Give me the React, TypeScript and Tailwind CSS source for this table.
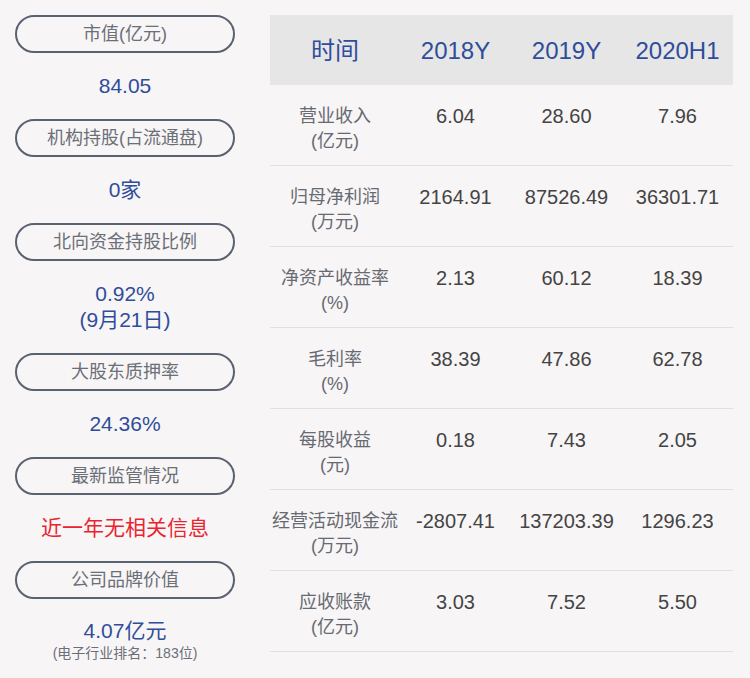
const font = { fontFamily: '"Liberation Sans", "Noto Sans CJK SC", sans-serif' };

type Stat = { label: string; lines: string[]; red?: boolean; note?: string };

const stats: Stat[] = [
  { label: "市值(亿元)", lines: ["84.05"] },
  { label: "机构持股(占流通盘)", lines: ["0家"] },
  { label: "北向资金持股比例", lines: ["0.92%", "(9月21日)"] },
  { label: "大股东质押率", lines: ["24.36%"] },
  { label: "最新监管情况", lines: ["近一年无相关信息"], red: true },
  { label: "公司品牌价值", lines: ["4.07亿元"], note: "(电子行业排名：183位)" },
];

const rows = [
  { name: "营业收入", unit: "(亿元)", vals: ["6.04", "28.60", "7.96"] },
  { name: "归母净利润", unit: "(万元)", vals: ["2164.91", "87526.49", "36301.71"] },
  { name: "净资产收益率", unit: "(%)", vals: ["2.13", "60.12", "18.39"] },
  { name: "毛利率", unit: "(%)", vals: ["38.39", "47.86", "62.78"] },
  { name: "每股收益", unit: "(元)", vals: ["0.18", "7.43", "2.05"] },
  { name: "经营活动现金流", unit: "(万元)", vals: ["-2807.41", "137203.39", "1296.23"] },
  { name: "应收账款", unit: "(亿元)", vals: ["3.03", "7.52", "5.50"] },
];

const App = () => {
  return (
    <div className="w-[750px] h-[678px] bg-[#f8f5f6] flex px-[15px] pt-[15px] overflow-hidden" style={font}>
      <div className="w-[220px] flex flex-col">
        {stats.map((s) => (
          <div key={s.label} className="flex flex-col">
            <div className="h-[38px] rounded-full border-2 border-[#5a6270] flex items-center justify-center text-[18px] text-[#6b6f77]">
              {s.label}
            </div>
            <div
              className={
                s.note
                  ? "pt-[19px] flex flex-col items-center"
                  : "py-[20px] flex flex-col items-center"
              }
            >
              {s.lines.map((l) => (
                <div
                  key={l}
                  className={
                    s.red
                      ? "text-[21px] leading-[26px] text-[#e8252f]"
                      : "text-[21px] leading-[26px] text-[#2f4d9b]"
                  }
                >
                  {l}
                </div>
              ))}
              {s.note && <div className="text-[14px] leading-[18px] text-[#6b6f77]">{s.note}</div>}
            </div>
          </div>
        ))}
      </div>
      <div className="ml-[35px] w-[463px] flex flex-col">
        <div className="grid grid-cols-[130px_1fr_1fr_1fr] h-[70px] pt-[2px] bg-[#e6e6e6] items-center text-center text-[24px] text-[#2f4d9b]">
          <div>时间</div>
          <div>2018Y</div>
          <div>2019Y</div>
          <div>2020H1</div>
        </div>
        {rows.map((r) => (
          <div
            key={r.name}
            className="grid grid-cols-[130px_1fr_1fr_1fr] h-[81px] pt-[19px] border-b border-[#e2e0e1] items-start text-center"
          >
            <div className="text-[18px] leading-[25px] text-[#666a72] flex flex-col">
              <span>{r.name}</span>
              <span>{r.unit}</span>
            </div>
            {r.vals.map((v, i) => (
              <div key={i} className="text-[20px] leading-[25px] text-[#444]">
                {v}
              </div>
            ))}
          </div>
        ))}
      </div>
    </div>
  );
};

export default App;
